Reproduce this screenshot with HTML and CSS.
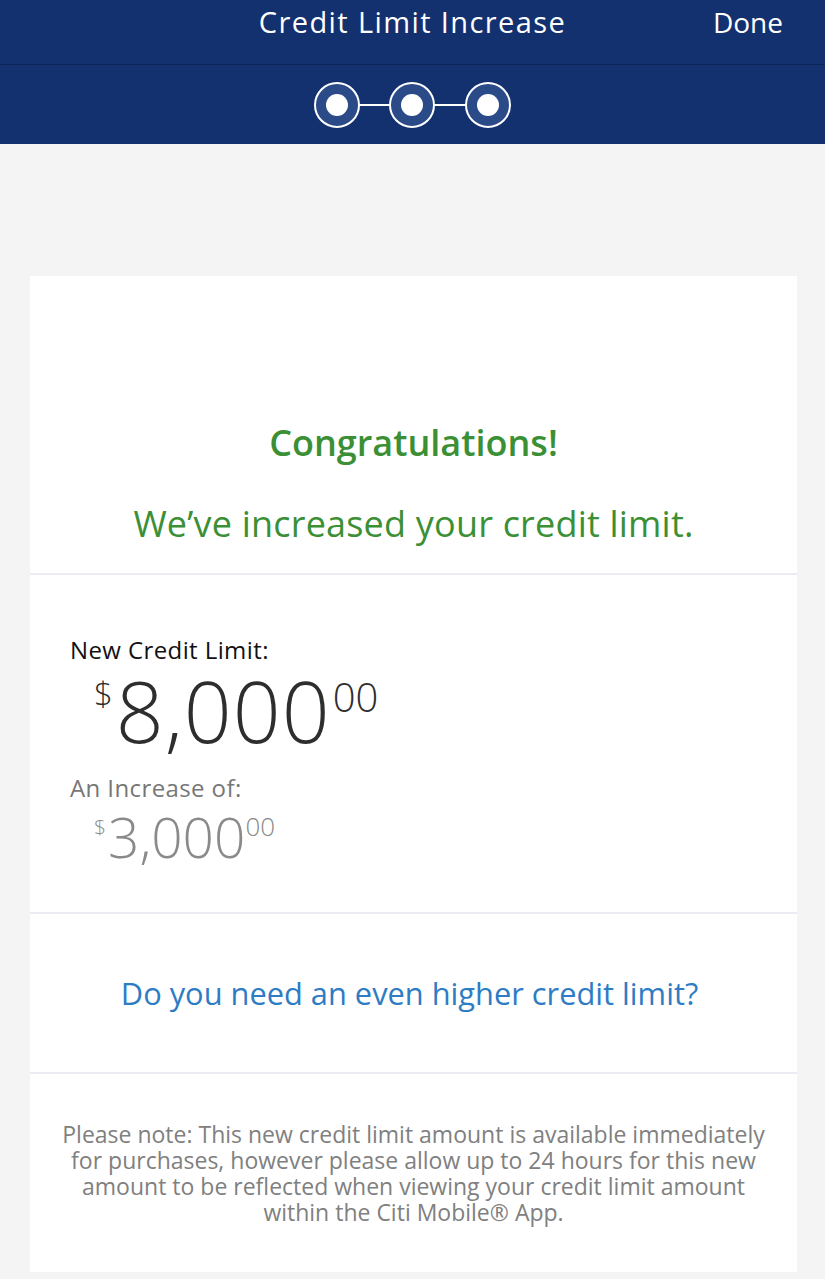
FILE: index.html
```
<!DOCTYPE html>
<html lang="en">
<head>
<meta charset="utf-8">
<title>Credit Limit Increase</title>
<link rel="stylesheet" href="styles.css">
</head>
<body>
<header class="topbar">
  <div class="titlebar">
    <span class="title">Credit Limit Increase</span>
    <span class="done">Done</span>
  </div>
  <div class="stepbar">
    <svg class="steps" width="200" height="50" viewBox="0 0 200 50" aria-hidden="true">
      <line x1="45" y1="25" x2="77" y2="25" stroke="#ffffff" stroke-width="2"/>
      <line x1="121" y1="25" x2="153" y2="25" stroke="#ffffff" stroke-width="2"/>
      <circle cx="24" cy="25" r="22" fill="#2b4a88" stroke="#ffffff" stroke-width="2"/>
      <circle cx="24" cy="25" r="11" fill="#ffffff"/>
      <circle cx="99" cy="25" r="22" fill="#2b4a88" stroke="#ffffff" stroke-width="2"/>
      <circle cx="99" cy="25" r="11" fill="#ffffff"/>
      <circle cx="175" cy="25" r="22" fill="#2b4a88" stroke="#ffffff" stroke-width="2"/>
      <circle cx="175" cy="25" r="11" fill="#ffffff"/>
    </svg>
  </div>
</header>
<main class="content">
  <section class="card">
    <div class="section congrats">
      <h1 class="congrats-title">Congratulations!</h1>
      <p class="congrats-sub">We’ve increased your credit limit.</p>
    </div>
    <div class="section amounts">
      <div class="label">New Credit Limit:</div>
      <div class="amount big"><span class="sym">$</span><span class="num">8,000</span><span class="cents">00</span></div>
      <div class="label muted">An Increase of:</div>
      <div class="amount small"><span class="sym">$</span><span class="num">3,000</span><span class="cents">00</span></div>
    </div>
    <div class="section higher">
      <a class="link" href="#">Do you need an even higher credit limit?</a>
    </div>
    <div class="section note">
      <p>Please note: This new credit limit amount is available immediately for purchases, however please allow up to 24 hours for this new amount to be reflected when viewing your credit limit amount within the Citi Mobile® App.</p>
    </div>
  </section>
</main>
</body>
</html>
```
FILE: styles.css
```
* { box-sizing: border-box; }
html, body { margin: 0; padding: 0; }
body {
  background: #f4f4f4;
  font-family: "Open Sans", "Noto Sans", sans-serif;
  width: 825px;
  min-height: 1279px;
}
.topbar { background: #13316f; }
.titlebar {
  height: 65px;
  display: flex;
  align-items: flex-start;
  justify-content: center;
  padding-top: 2px;
  position: relative;
  border-bottom: 1px solid #0d2456;
}
.title {
  color: #fff;
  font-size: 29px;
  font-weight: 500;
  letter-spacing: 1.4px;
  line-height: 40px;
}
.done {
  position: absolute;
  right: 42px;
  top: 2px;
  color: #fff;
  font-size: 28px;
  font-weight: 500;
  line-height: 40px;
}
.stepbar {
  height: 79px;
  display: flex;
  justify-content: center;
  align-items: center;
  padding-left: 1px;
}
.steps { display: block; }
.content { padding: 132px 28px 8px 30px; }
.card { background: #fff; }
.section { border-bottom: 2px solid #ebebf3; }
.section:last-child { border-bottom: none; }
.congrats {
  height: 299px;
  padding-top: 144px;
  text-align: center;
  color: #3b8f35;
}
.congrats-title {
  margin: 0;
  font-size: 36px;
  font-weight: 600;
  line-height: 46px;
}
.congrats-sub {
  margin: 35px 0 0;
  font-size: 36px;
  font-weight: 400;
  letter-spacing: 0.2px;
  line-height: 46px;
}
.amounts {
  height: 339px;
  padding: 60px 40px 0;
}
.label {
  font-size: 24px;
  letter-spacing: 0.4px;
  color: #111;
  line-height: 30px;
}
.label.muted { color: #777; margin-top: 20px; }
.amount {
  display: flex;
  align-items: flex-start;
  font-weight: 300;
  padding-left: 24px;
}
.amount span { line-height: 1; }
.amount.big { color: #2e2e2e; margin-top: 4px; height: 84px; }
.amount.big .sym { font-size: 33px; margin-top: 8px; margin-right: 3px; color: #2a2a2a; }
.amount.big .num { font-size: 84px; letter-spacing: 1px; }
.amount.big .cents { font-size: 40px; margin-top: 8px; margin-left: 2px; }
.amount.small { color: #8a8a8a; margin-top: 6px; height: 55px; }
.amount.small .sym { font-size: 21px; margin-top: 8px; margin-right: 2px; }
.amount.small .num { font-size: 55px; }
.amount.small .cents { font-size: 26px; margin-top: 4px; margin-left: 0; }
.higher {
  height: 160px;
  display: flex;
  align-items: center;
  justify-content: center;
  padding-right: 8px;
}
.link {
  color: #2e7cc4;
  text-decoration: none;
  font-size: 30.8px;
}
.note {
  height: 198px;
  padding: 47px 30px 0;
  text-align: center;
}
.note p {
  margin: 0;
  font-size: 23px;
  line-height: 26px;
  color: #808080;
}
```
